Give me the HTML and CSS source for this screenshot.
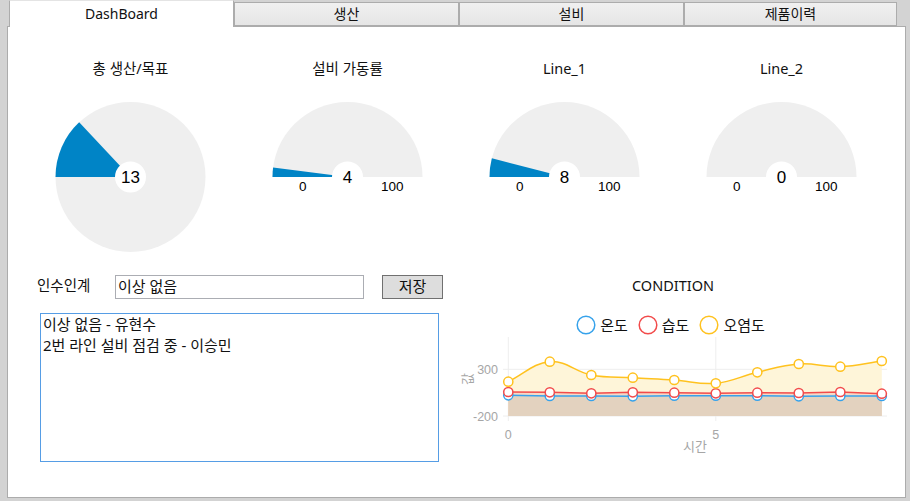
FILE: index.html
```html
<!DOCTYPE html>
<html lang="ko">
<head>
<meta charset="utf-8">
<title>DashBoard</title>
<link rel="stylesheet" href="styles.css">
</head>
<body>
<div class="window">
  <div class="tabs">
    <div class="tab active">DashBoard</div>
    <div class="tab">생산</div>
    <div class="tab">설비</div>
    <div class="tab last">제품이력</div>
  </div>
  <div class="panel">
    <div class="gauges">
      <div class="gauge">
        <div class="g-title">총 생산/목표</div>
        <svg class="g-svg" width="217" height="176" viewBox="0 0 217 176">
          <circle cx="108.5" cy="98" r="75" class="g-bg"/>
          <path d="M108.5,98 L33.5,98 A75,75 0 0 1 57.15,43.33 Z" class="g-val"/>
          <circle cx="108.5" cy="98" r="15.5" class="g-hole"/>
          <text x="108.5" y="104" class="g-num">13</text>
        </svg>
      </div>
      <div class="gauge">
        <div class="g-title">설비 가동률</div>
        <svg class="g-svg" width="217" height="176" viewBox="0 0 217 176">
          <path d="M33.5,98 A75,75 0 0 1 183.5,98 Z" class="g-bg"/>
          <path d="M108.5,98 L33.5,98 A75,75 0 0 1 34.09,88.6 Z" class="g-val"/>
          <circle cx="108.5" cy="98" r="15.5" class="g-hole"/>
          <text x="108.5" y="104" class="g-num">4</text>
          <text x="63.8" y="111.7" class="g-lim">0</text>
          <text x="153.2" y="111.7" class="g-lim">100</text>
        </svg>
      </div>
      <div class="gauge">
        <div class="g-title">Line_1</div>
        <svg class="g-svg" width="217" height="176" viewBox="0 0 217 176">
          <path d="M33.5,98 A75,75 0 0 1 183.5,98 Z" class="g-bg"/>
          <path d="M108.5,98 L33.5,98 A75,75 0 0 1 35.86,79.35 Z" class="g-val"/>
          <circle cx="108.5" cy="98" r="15.5" class="g-hole"/>
          <text x="108.5" y="104" class="g-num">8</text>
          <text x="63.8" y="111.7" class="g-lim">0</text>
          <text x="153.2" y="111.7" class="g-lim">100</text>
        </svg>
      </div>
      <div class="gauge">
        <div class="g-title">Line_2</div>
        <svg class="g-svg" width="217" height="176" viewBox="0 0 217 176">
          <path d="M33.5,98 A75,75 0 0 1 183.5,98 Z" class="g-bg"/>
          <circle cx="108.5" cy="98" r="15.5" class="g-hole"/>
          <text x="108.5" y="104" class="g-num">0</text>
          <text x="63.8" y="111.7" class="g-lim">0</text>
          <text x="153.2" y="111.7" class="g-lim">100</text>
        </svg>
      </div>
    </div>

    <div class="lower">
      <div class="handover">
        <div class="row">
          <div class="lbl">인수인계</div>
          <div class="input">이상 없음</div>
          <div class="btn">저장</div>
        </div>
        <div class="log">
          <div class="log-line">이상 없음 - 유현수</div>
          <div class="log-line">2번 라인 설비 점검 중 - 이승민</div>
        </div>
      </div>

      <div class="chart">
        <div class="c-title">CONDITION</div>
        <div class="legend">
          <div class="lg-item">
            <svg width="20" height="20" viewBox="0 0 20 20"><circle cx="10" cy="10" r="8.8" class="lg-c blue"/></svg>
            <span>온도</span>
          </div>
          <div class="lg-item">
            <svg width="20" height="20" viewBox="0 0 20 20"><circle cx="10" cy="10" r="8.8" class="lg-c red"/></svg>
            <span>습도</span>
          </div>
          <div class="lg-item">
            <svg width="20" height="20" viewBox="0 0 20 20"><circle cx="10" cy="10" r="8.8" class="lg-c yellow"/></svg>
            <span>오염도</span>
          </div>
        </div>
        <svg class="plot" width="440" height="125" viewBox="0 0 440 125">
          <g class="grid">
            <line x1="55.3" y1="2" x2="55.3" y2="86"/>
            <line x1="262.8" y1="2" x2="262.8" y2="86"/>
            <line x1="50" y1="34.3" x2="434" y2="34.3"/>
            <line x1="50" y1="81" x2="434" y2="81"/>
          </g>
          <path class="area-y" d="M55.3,46.7 C71.9,38.7 80.2,28.04 96.8,26.7 C113.4,25.36 121.7,36.8 138.3,40 C154.9,43.2 163.2,41.7 179.8,42.7 C196.4,43.7 204.7,43.88 221.3,45 C237.9,46.12 246.2,49.84 262.8,48.3 C279.4,46.76 287.7,41.16 304.3,37.3 C320.9,33.44 329.2,30.12 345.8,29 C362.4,27.88 370.7,32.3 387.3,31.7 C403.9,31.1 412.2,28.28 428.8,26 L428.8,81 L55.3,81 Z"/>
          <path class="area-r" d="M55.3,57 L96.8,57.3 L138.3,58.3 L179.8,57.3 L221.3,57.7 L262.8,58.3 L304.3,57.7 L345.8,58 L387.3,57 L428.8,58.7 L428.8,81 L55.3,81 Z"/>
          <path class="area-b" d="M55.3,60.3 L96.8,61 L138.3,61 L179.8,61.3 L221.3,60.7 L262.8,60.7 L304.3,60.7 L345.8,61.3 L387.3,61 L428.8,61 L428.8,81 L55.3,81 Z"/>

          <polyline class="ln blue" points="55.3,60.3 96.8,61 138.3,61 179.8,61.3 221.3,60.7 262.8,60.7 304.3,60.7 345.8,61.3 387.3,61 428.8,61"/>
          <g class="pt blue">
            <circle cx="55.3" cy="60.3" r="4.6"/><circle cx="96.8" cy="61" r="4.6"/><circle cx="138.3" cy="61" r="4.6"/><circle cx="179.8" cy="61.3" r="4.6"/><circle cx="221.3" cy="60.7" r="4.6"/><circle cx="262.8" cy="60.7" r="4.6"/><circle cx="304.3" cy="60.7" r="4.6"/><circle cx="345.8" cy="61.3" r="4.6"/><circle cx="387.3" cy="61" r="4.6"/><circle cx="428.8" cy="61" r="4.6"/>
          </g>
          <polyline class="ln red" points="55.3,57 96.8,57.3 138.3,58.3 179.8,57.3 221.3,57.7 262.8,58.3 304.3,57.7 345.8,58 387.3,57 428.8,58.7"/>
          <g class="pt red">
            <circle cx="55.3" cy="57" r="4.6"/><circle cx="96.8" cy="57.3" r="4.6"/><circle cx="138.3" cy="58.3" r="4.6"/><circle cx="179.8" cy="57.3" r="4.6"/><circle cx="221.3" cy="57.7" r="4.6"/><circle cx="262.8" cy="58.3" r="4.6"/><circle cx="304.3" cy="57.7" r="4.6"/><circle cx="345.8" cy="58" r="4.6"/><circle cx="387.3" cy="57" r="4.6"/><circle cx="428.8" cy="58.7" r="4.6"/>
          </g>
          <path class="ln yellow" d="M55.3,46.7 C71.9,38.7 80.2,28.04 96.8,26.7 C113.4,25.36 121.7,36.8 138.3,40 C154.9,43.2 163.2,41.7 179.8,42.7 C196.4,43.7 204.7,43.88 221.3,45 C237.9,46.12 246.2,49.84 262.8,48.3 C279.4,46.76 287.7,41.16 304.3,37.3 C320.9,33.44 329.2,30.12 345.8,29 C362.4,27.88 370.7,32.3 387.3,31.7 C403.9,31.1 412.2,28.28 428.8,26"/>
          <g class="pt yellow">
            <circle cx="55.3" cy="46.7" r="4.6"/><circle cx="96.8" cy="26.7" r="4.6"/><circle cx="138.3" cy="40" r="4.6"/><circle cx="179.8" cy="42.7" r="4.6"/><circle cx="221.3" cy="45" r="4.6"/><circle cx="262.8" cy="48.3" r="4.6"/><circle cx="304.3" cy="37.3" r="4.6"/><circle cx="345.8" cy="29" r="4.6"/><circle cx="387.3" cy="31.7" r="4.6"/><circle cx="428.8" cy="26" r="4.6"/>
          </g>

          <text x="45" y="38.8" class="ax ax-y">300</text>
          <text x="45" y="85.5" class="ax ax-y">-200</text>
          <text x="55.3" y="104" class="ax ax-x">0</text>
          <text x="262.8" y="104" class="ax ax-x">5</text>
          <text x="242" y="116" class="ax-title">시간</text>
          <text x="0" y="0" class="ax-title" transform="translate(19 44) rotate(-90)">값</text>
        </svg>
      </div>
    </div>
  </div>
</div>
</body>
</html>
```

FILE: styles.css
```css
* { box-sizing: border-box; }

html, body {
  margin: 0;
  padding: 0;
}

body {
  font-family: "Noto Sans", "Noto Sans CJK KR", sans-serif;
  color: #111;
}

.window {
  width: 910px;
  height: 501px;
  background: #d3d3d3;
  overflow: hidden;
}

/* ---------- tabs ---------- */
.tabs {
  display: flex;
  height: 26px;
  padding-left: 9px;
}

.tab {
  width: 225px;
  height: 24px;
  margin-top: 2px;
  border: 1px solid #acacac;
  background: linear-gradient(#f0f0f0, #e5e5e5);
  font-size: 14px;
  line-height: 21px;
  text-align: center;
  color: #111;
}

.tab.active {
  height: 27px;
  margin-top: 0;
  border-bottom: none;
  border-color: #e4e4e4 #acacac #acacac #acacac;
  background: #fff;
  line-height: 25px;
  position: relative;
  z-index: 1;
}

.tab.last {
  width: 213px;
}

/* ---------- panel ---------- */
.panel {
  margin-left: 7px;
  width: 899px;
  height: 472px;
  background: #fff;
  border: 1px solid #acacac;
}

.gauges {
  display: grid;
  grid-template-columns: repeat(4, 217px);
  margin-left: 14px;
  height: 248px;
}

.gauge {
  height: 248px;
}

.g-title {
  margin-top: 30px;
  height: 22px;
  line-height: 22px;
  font-size: 14.5px;
  text-align: center;
}

.g-svg {
  display: block;
  overflow: visible;
}

.g-bg { fill: #efefef; }
.g-val { fill: #0084c6; }
.g-hole { fill: #fff; }

.g-num {
  font-family: "Liberation Sans", Arial, sans-serif;
  font-size: 17px;
  fill: #000;
  text-anchor: middle;
}

.g-lim {
  font-family: "Liberation Sans", Arial, sans-serif;
  font-size: 13.5px;
  fill: #000;
  text-anchor: middle;
}

/* ---------- lower ---------- */
.lower {
  display: flex;
}

.handover {
  width: 445px;
  padding-left: 29px;
}

.row {
  display: flex;
  height: 24px;
}

.lbl {
  width: 78px;
  font-size: 14.5px;
  line-height: 20px;
}

.input {
  width: 249px;
  height: 24px;
  border: 1px solid #abadb3;
  padding-left: 2px;
  font-size: 15px;
  line-height: 21px;
}

.btn {
  margin-left: 18px;
  width: 61px;
  height: 24px;
  border: 1px solid #707070;
  background: #dddddd;
  text-align: center;
  font-size: 15px;
  line-height: 21px;
}

.log {
  margin-left: 3px;
  margin-top: 14px;
  width: 399px;
  height: 149px;
  border: 1px solid #569de5;
  padding: 0 2px;
  font-size: 15px;
  line-height: 21px;
}

/* ---------- chart ---------- */
.chart {
  width: 440px;
}

.c-title {
  text-align: center;
  font-size: 14.5px;
  line-height: 20px;
}

.legend {
  margin-top: 20px;
  display: flex;
  justify-content: center;
  gap: 10px;
  height: 20px;
  padding-right: 5px;
}

.lg-item {
  display: flex;
  align-items: center;
  gap: 4px;
  font-size: 15px;
  line-height: 20px;
}

.lg-item svg { display: block; }

.lg-c { fill: #fff; stroke-width: 1.5; }
.lg-c.blue { stroke: #36a2eb; }
.lg-c.red { stroke: #f24b4b; }
.lg-c.yellow { stroke: #ffc21f; }

.plot { display: block; }

.grid line {
  stroke: #eeeeee;
  stroke-width: 1;
}

.area-y { fill: #fef5d9; }
.area-r { fill: #f6d9c6; }
.area-b { fill: #e3d2bf; }

.ln {
  fill: none;
  stroke-width: 1.5;
}
.ln.blue { stroke: #36a2eb; }
.ln.red { stroke: #f24b4b; }
.ln.yellow { stroke: #ffc21f; }

.pt circle {
  fill: #fff;
  stroke-width: 1.5;
}
.pt.blue circle { stroke: #36a2eb; }
.pt.red circle { stroke: #f24b4b; }
.pt.yellow circle { stroke: #ffc21f; }

.ax {
  font-family: "Liberation Sans", Arial, sans-serif;
  font-size: 12.5px;
  fill: #a6a6a6;
}
.ax-y { text-anchor: end; }
.ax-x { text-anchor: middle; }

.ax-title {
  font-family: "Noto Sans CJK KR", sans-serif;
  font-size: 13px;
  fill: #a6a6a6;
  text-anchor: middle;
}
```
